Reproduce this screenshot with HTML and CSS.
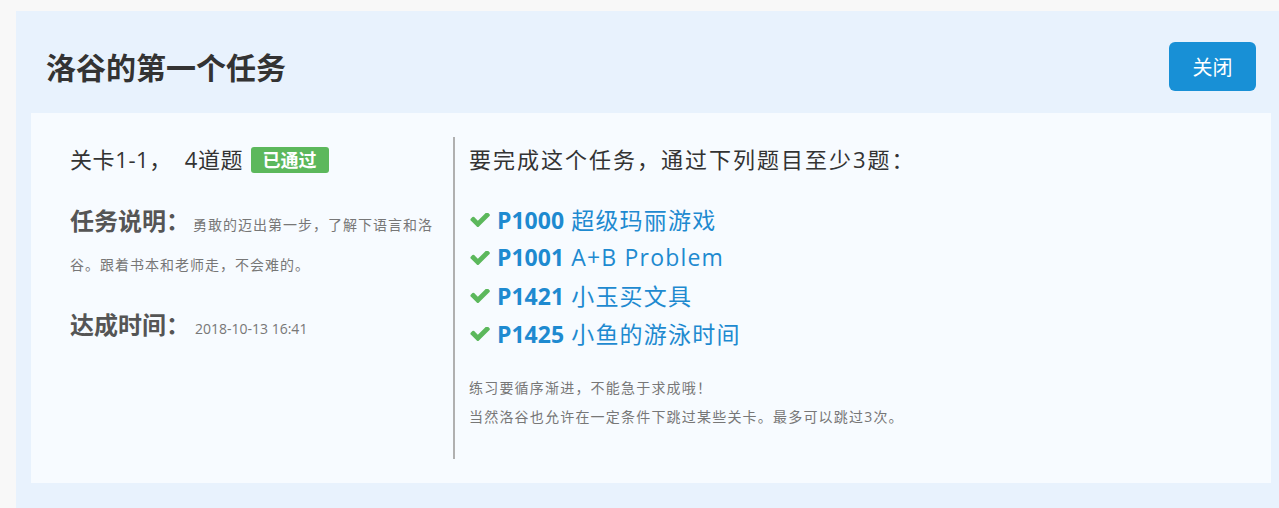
FILE: index.html
```html
<!DOCTYPE html>
<html lang="zh-CN">
<head>
<meta charset="utf-8">
<title>洛谷的第一个任务</title>
<link rel="stylesheet" href="styles.css">
</head>
<body>
<div class="panel">
  <div class="panel-head">
    <h2 class="title">洛谷的第一个任务</h2>
    <button class="btn" type="button">关闭</button>
  </div>
  <div class="card">
    <div class="col-left">
      <div class="stage">关卡1-1，<span class="sp"></span>4道题 <span class="badge">已通过</span></div>
      <div class="info"><strong>任务说明：</strong>勇敢的迈出第一步，了解下语言和洛谷。跟着书本和老师走，不会难的。</div>
      <div class="info"><strong>达成时间：</strong><span class="date">2018-10-13 16:41</span></div>
    </div>
    <div class="col-right">
      <div class="req">要完成这个任务，通过下列题目至少3题：</div>
      <ul class="probs">
        <li><svg class="check" viewBox="90 420 1590 1070"><path d="M1671 566q0 40-28 68l-724 724-136 136q-28 28-68 28t-68-28l-136-136-362-362q-28-28-28-68t28-68l136-136q28-28 68-28t68 28l294 295 656-657q28-28 68-28t68 28l136 136q28 28 28 68z"/></svg><a class="prob"><b class="pid">P1000</b> 超级玛丽游戏</a></li>
        <li><svg class="check" viewBox="90 420 1590 1070"><path d="M1671 566q0 40-28 68l-724 724-136 136q-28 28-68 28t-68-28l-136-136-362-362q-28-28-28-68t28-68l136-136q28-28 68-28t68 28l294 295 656-657q28-28 68-28t68 28l136 136q28 28 28 68z"/></svg><a class="prob"><b class="pid">P1001</b> A+B Problem</a></li>
        <li><svg class="check" viewBox="90 420 1590 1070"><path d="M1671 566q0 40-28 68l-724 724-136 136q-28 28-68 28t-68-28l-136-136-362-362q-28-28-28-68t28-68l136-136q28-28 68-28t68 28l294 295 656-657q28-28 68-28t68 28l136 136q28 28 28 68z"/></svg><a class="prob"><b class="pid">P1421</b> 小玉买文具</a></li>
        <li><svg class="check" viewBox="90 420 1590 1070"><path d="M1671 566q0 40-28 68l-724 724-136 136q-28 28-68 28t-68-28l-136-136-362-362q-28-28-28-68t28-68l136-136q28-28 68-28t68 28l294 295 656-657q28-28 68-28t68 28l136 136q28 28 28 68z"/></svg><a class="prob"><b class="pid">P1425</b> 小鱼的游泳时间</a></li>
      </ul>
      <div class="notes">
        <p>练习要循序渐进，不能急于求成哦！</p>
        <p>当然洛谷也允许在一定条件下跳过某些关卡。最多可以跳过3次。</p>
      </div>
    </div>
  </div>
</div>
</body>
</html>
```

FILE: styles.css
```css
html, body {
  margin: 0;
  overflow: hidden;
}
body {
  background: #f8f8f8;
  font-family: "Open Sans", "Noto Sans CJK SC", sans-serif;
  color: #333;
}
.panel {
  margin: 11px 0 0 16px;
  width: 1270px;
  min-height: 520px;
  box-sizing: border-box;
  padding: 0 15px 30px;
  background: #e8f2fd;
}
.panel-head {
  display: flex;
  align-items: center;
  justify-content: space-between;
  box-sizing: border-box;
  height: 102px;
  padding: 8px 15px 0;
}
.title {
  margin: 0;
  font-size: 30px;
  font-weight: bold;
  color: #333;
}
.btn {
  width: 87px;
  height: 49px;
  border: 0;
  border-radius: 6px;
  background: #1890d6;
  color: #fff;
  font-family: inherit;
  font-size: 20px;
}
.card {
  display: flex;
  padding: 24px 0;
  height: 370px;
  box-sizing: border-box;
  background: #f7fbff;
}
.col-left {
  width: 422px;
  box-sizing: border-box;
  padding: 0 17px 0 39px;
}
.stage {
  font-size: 22px;
  line-height: 44px;
  letter-spacing: 0.6px;
  color: #333;
}
.sp {
  display: inline-block;
  width: 13px;
}
.badge {
  display: inline-block;
  vertical-align: middle;
  margin-left: 1px;
  margin-top: -4px;
  padding: 0 12px;
  height: 26px;
  line-height: 26px;
  border-radius: 3px;
  background: #5cb85c;
  color: #fff;
  font-size: 18px;
  font-weight: bold;
  letter-spacing: 0;
}
.info {
  margin-top: 20px;
  font-size: 14px;
  line-height: 40px;
  letter-spacing: 1px;
  color: #777;
}
.info strong {
  font-size: 24px;
  color: #555;
  letter-spacing: 0;
  margin-right: 3px;
}
.date {
  font-size: 14px;
  letter-spacing: 0;
  margin-left: 2px;
}
.col-right {
  flex: 1;
  border-left: 2px solid #b0b0b0;
  padding-left: 14px;
}
.req {
  font-size: 22px;
  line-height: 44px;
  letter-spacing: 2px;
  color: #333;
}
.probs {
  list-style: none;
  margin: 19px 0 0;
  padding: 0;
}
.probs li {
  display: flex;
  align-items: center;
  height: 38px;
}
.check {
  width: 20px;
  height: 14px;
  fill: #5cb85c;
  margin: 2px 7px 0 1px;
}
.prob {
  font-size: 23px;
  letter-spacing: 1.2px;
  color: #1e8ad0;
}
.pid {
  letter-spacing: 0;
}
.notes {
  margin-top: 21px;
  font-size: 14px;
  letter-spacing: 1.2px;
  color: #777;
}
.notes p {
  margin: 0;
  line-height: 29px;
}
```
